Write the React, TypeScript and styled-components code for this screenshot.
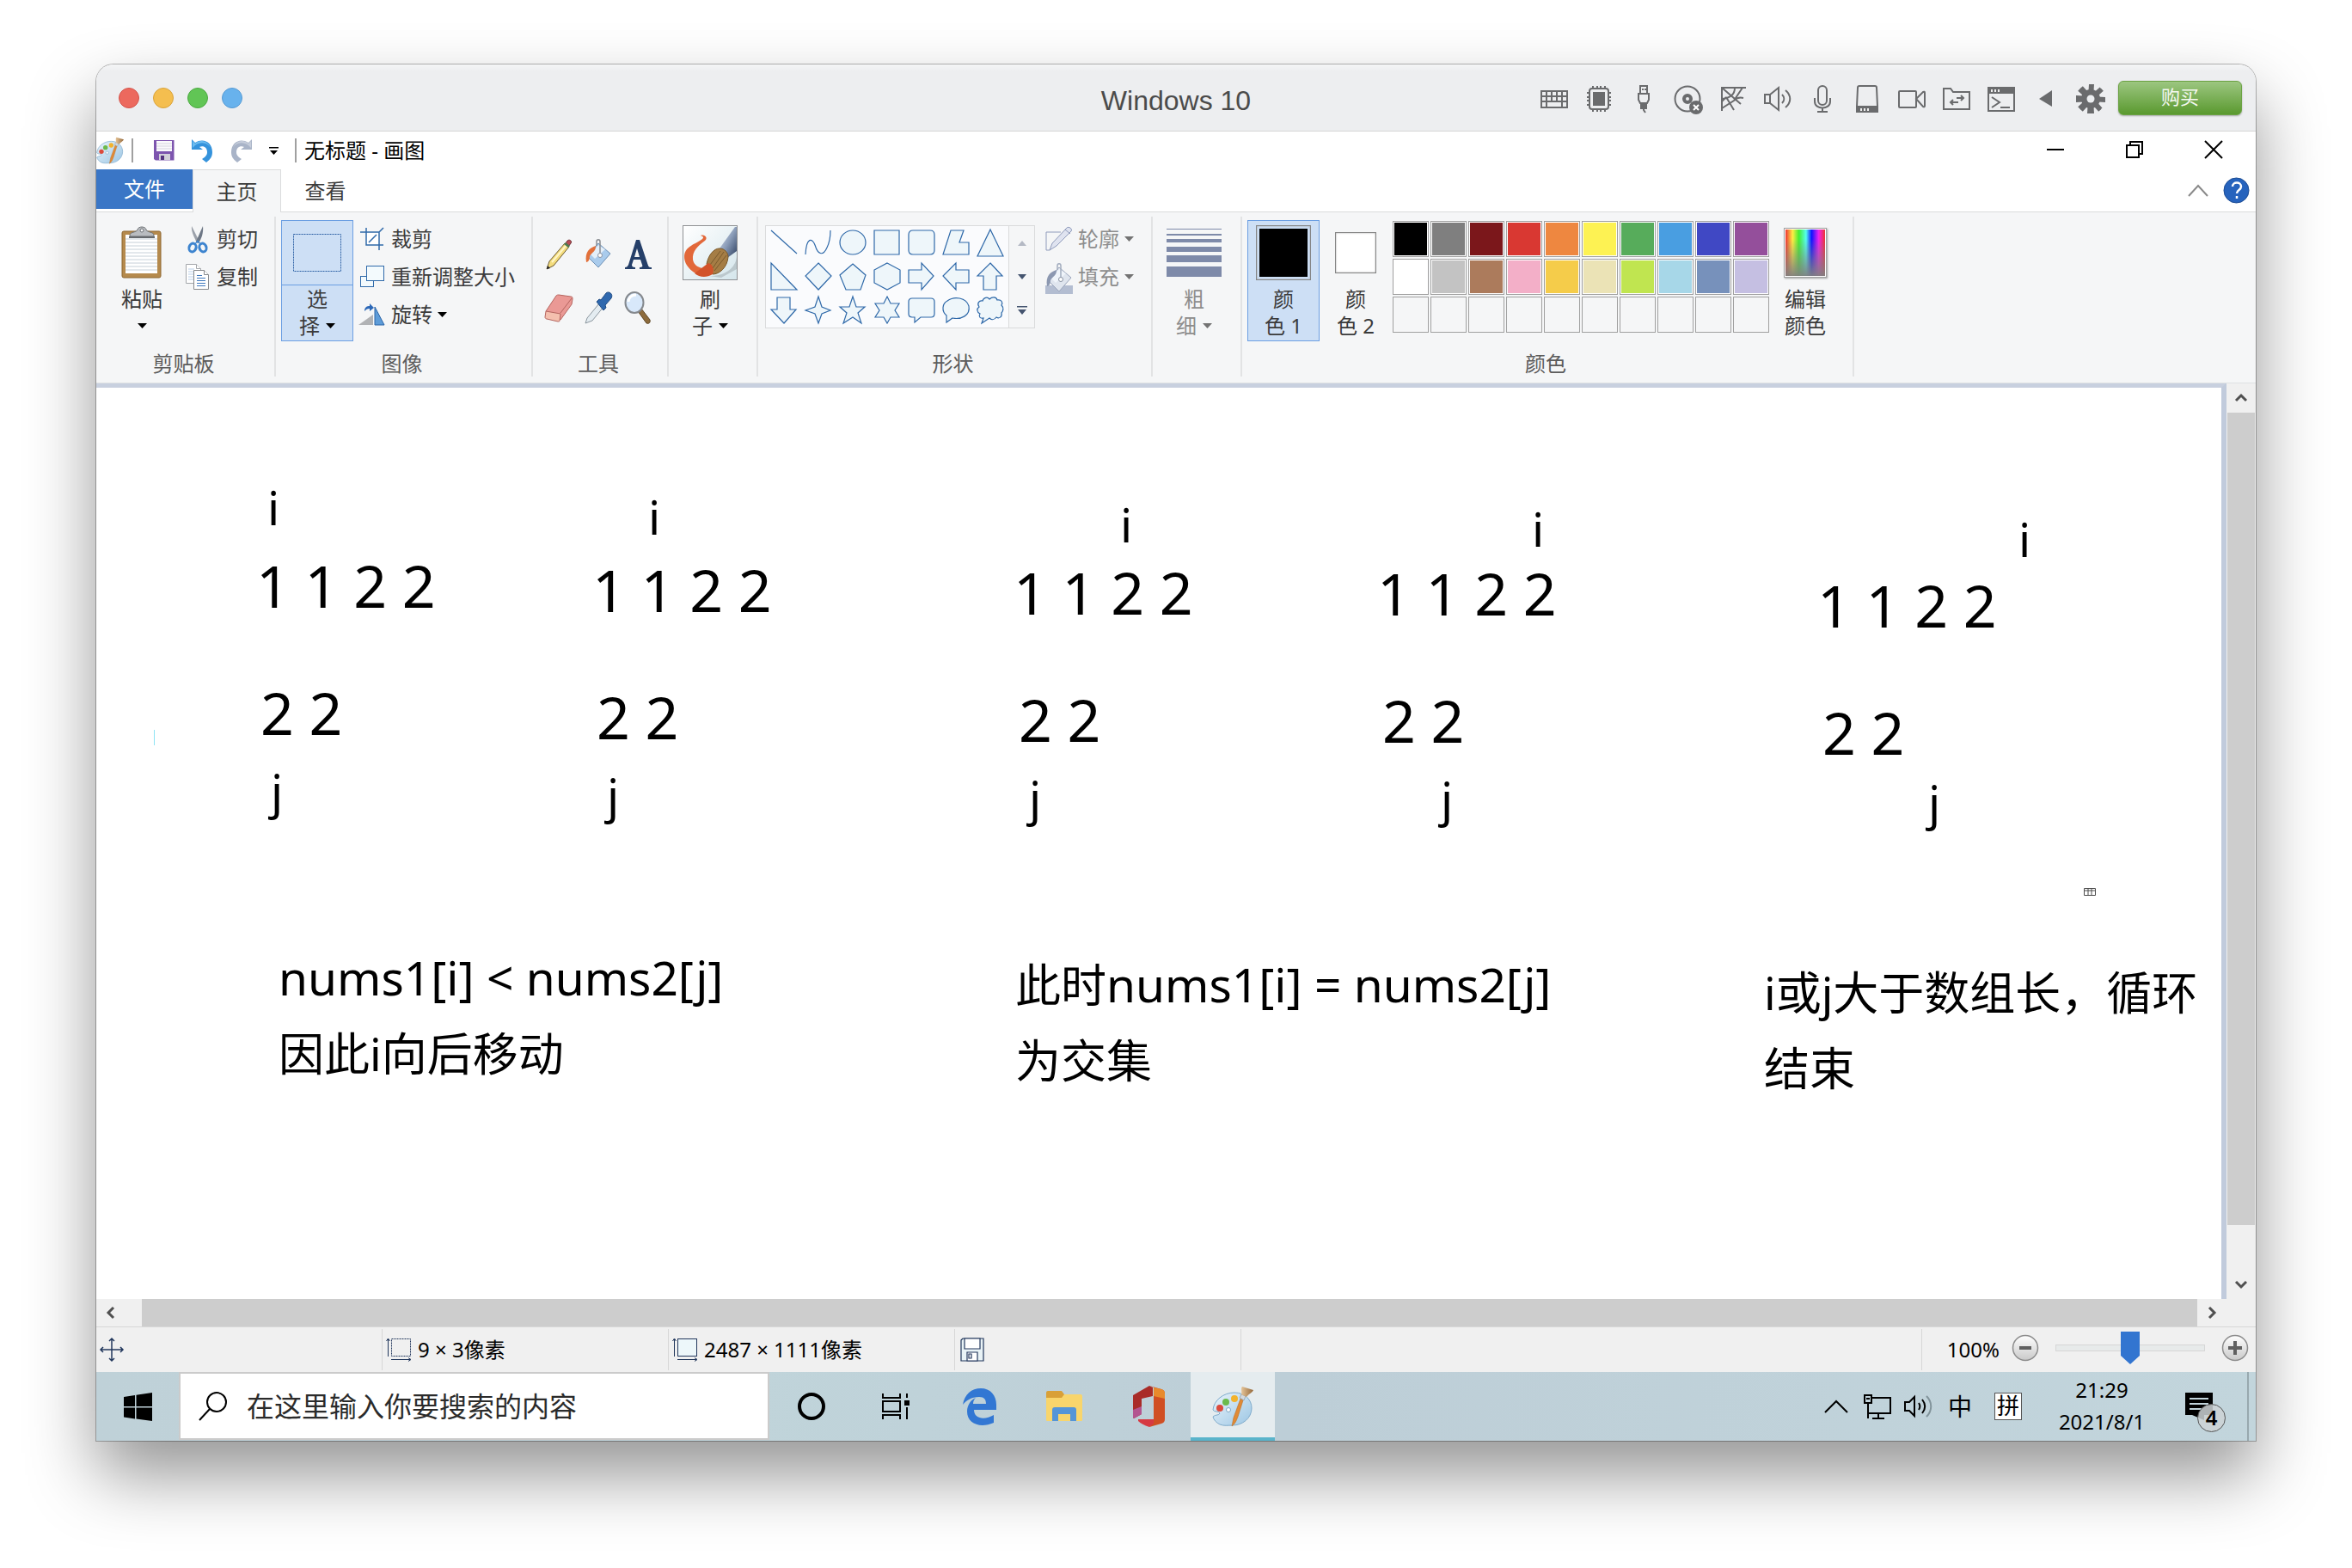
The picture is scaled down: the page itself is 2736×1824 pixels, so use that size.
import React from 'react';
import styled, { createGlobalStyle, css } from 'styled-components';

const ui = '"Noto Sans", "Noto Sans CJK SC", sans-serif';

const GlobalStyle = createGlobalStyle`
  * { box-sizing: border-box; }
  body { margin: 0; background: #fff; font-family: ${ui}; }
  button, input { font: inherit; color: inherit; }
  button { border: 0; padding: 0; background: none; cursor: default; }
  svg { display: block; flex: none; overflow: visible; }
`;

/* ---------- window shell ---------- */

const Stage = styled.div`
  min-height: 100vh;
  display: flex;
  padding: 75px 112px 148px;
`;

const Window = styled.main`
  flex: 1;
  min-width: 0;
  display: flex;
  flex-direction: column;
  background: #fff;
  border-radius: 20px 20px 0 0;
  box-shadow: 0 0 0 1px rgba(0, 0, 0, 0.28), 0 40px 80px rgba(0, 0, 0, 0.42);
  overflow: hidden;
  font-size: 24px;
  line-height: 32px;
`;

const MacBar = styled.header`
  display: grid;
  grid-template-columns: 1fr auto 1fr;
  align-items: center;
  height: 78px;
  background: linear-gradient(#f4f5f6, #edeef0 8px);
  border-bottom: 1px solid #d6d6d6;
`;

const Lights = styled.div`
  display: flex;
  gap: 16px;
  padding-left: 26px;
`;

const Light = styled.button<{ $fill: string; $edge: string }>`
  width: 24px;
  height: 24px;
  border-radius: 50%;
  background: ${p => p.$fill};
  border: 1px solid ${p => p.$edge};
`;

const MacTitle = styled.h1`
  margin: 0;
  padding-top: 6px;
  font: 400 32px/40px "Liberation Sans", Arial, sans-serif;
  color: #4b4b4b;
`;

const MacTools = styled.div`
  display: flex;
  align-items: center;
  justify-content: flex-end;
  padding-right: 16px;
`;

const MacTool = styled.button`
  width: 52px;
  height: 40px;
  padding-top: 3px;
  display: grid;
  place-items: center;
  color: #6a6b6d;
`;

const BuyButton = styled.button`
  width: 144px;
  height: 40px;
  margin-left: 6px;
  border: 1px solid #6ba243;
  border-radius: 6px;
  background: linear-gradient(#9cc680, #5a992f);
  box-shadow: 0 1px 2px rgba(0, 0, 0, 0.3);
  color: #f4f8f0;
  font-size: 22px;
  line-height: 32px;
  padding-bottom: 4px;
`;

/* ---------- title row and tabs ---------- */

const QuickBar = styled.div`
  display: flex;
  align-items: center;
  height: 44px;
`;

const QuickButton = styled.button<{ $w: number }>`
  width: ${p => p.$w}px;
  height: 44px;
  display: grid;
  place-items: center;
`;

const QuickGroup = styled.div`
  display: flex;
  padding-left: 4px;
`;

const Rule = styled.span`
  width: 2px;
  height: 28px;
  margin: 0 9px;
  background: #a0a0a0;
`;

const DocTitle = styled.h2`
  flex: 1;
  margin: 0;
  font-size: 24px;
  font-weight: 400;
  color: #000;
`;

const CaptionButton = styled.button`
  width: 92px;
  height: 44px;
  display: grid;
  place-items: center;
`;

const CaptionButtons = styled.div`
  display: flex;
  padding: 0 3px 2px 0;
`;

const TabRow = styled.nav`
  display: flex;
  height: 50px;
  border-bottom: 1px solid #dadbdc;
  color: #3b3b3b;
`;

const FileTab = styled.button`
  width: 112px;
  height: 46px;
  background: #3a76c6;
  color: #fff;
`;

const Tab = styled.button<{ $active?: boolean }>`
  width: 103px;
  height: 50px;
  ${p => p.$active && css`
    background: #f5f6f7;
    border: 1px solid #dadbdc;
    border-bottom: 0;
  `}
`;

const TabEnd = styled.div`
  margin-left: auto;
  display: flex;
  align-items: center;
  gap: 18px;
  padding-right: 7px;
`;

/* ---------- ribbon ---------- */

const Ribbon = styled.section`
  display: flex;
  padding: 5px 0 7px;
  background: #f5f6f7;
  border-bottom: 1px solid #dfe1e4;
  color: #3b3b3b;
`;

const Group = styled.div<{ $w: number }>`
  width: ${p => p.$w}px;
  height: 186px;
  display: flex;
  flex-direction: column;
  border-right: 2px solid #e2e3e4;
`;

const GroupBody = styled.div<{ $pad?: number; $gap?: number }>`
  flex: 1;
  display: flex;
  align-items: flex-start;
  gap: ${p => p.$gap ?? 3}px;
  padding: 4px 0 0 ${p => p.$pad ?? 6}px;
`;

const GroupLabel = styled.div`
  height: 30px;
  padding-right: 4px;
  line-height: 30px;
  text-align: center;
  color: #5c5c5c;
`;

const BigButton = styled.button<{ $on?: boolean; $split?: boolean }>`
  width: 84px;
  height: 141px;
  display: flex;
  flex-direction: column;
  align-items: center;
  border: 1px solid ${p => (p.$on ? '#6c9fe2' : 'transparent')};
  background: ${p => (p.$on ? '#cddff5' : 'none')};
  line-height: 31px;
  &:disabled { color: #8d8d8d; }
  > :first-child {
    width: 100%;
    height: 75px;
    display: grid;
    place-items: center;
    border-bottom: 1px solid ${p => (p.$split ? '#6c9fe2' : 'transparent')};
  }
`;

const Line = styled.span`
  display: flex;
  align-items: center;
  justify-content: center;
  gap: 7px;
  height: 31px;
  white-space: pre;
`;

const SmallColumn = styled.div`
  display: flex;
  flex-direction: column;
`;

const SmallButton = styled.button`
  display: flex;
  align-items: center;
  gap: 6px;
  height: 44px;
  padding: 0 4px;
  &:disabled { color: #8d8d8d; }
`;

const IconBox = styled.span`
  width: 32px;
  height: 32px;
  display: grid;
  place-items: center;
`;

const ToolGrid = styled.div`
  display: grid;
  grid-template-columns: repeat(3, 46px);
  grid-auto-rows: 62px;
  padding-top: 9px;
`;

const CellButton = styled.button`
  display: grid;
  place-items: center;
`;

const Frame = styled.span`
  width: 64px;
  height: 64px;
  border: 1px solid #8f9194;
  overflow: hidden;
`;

const Gallery = styled.div`
  display: grid;
  grid-template-columns: 1fr 30px;
  width: 314px;
  height: 120px;
  margin: 6px 5px 0 0;
  border: 1px solid #dadbdc;
  background: #fafbfd;
`;

const ShapeGrid = styled.div`
  display: grid;
  grid-template-columns: repeat(7, 40px);
  grid-template-rows: repeat(3, 1fr);
  padding-left: 1px;
`;

const GalleryScroll = styled.div`
  display: grid;
  grid-template-rows: repeat(3, 1fr);
  border-left: 1px solid #dadbdc;
  background: #f5f6f7;
`;

const Weights = styled.span`
  width: 64px;
  height: 56px;
  display: flex;
  flex-direction: column;
  justify-content: space-between;
`;

const Weight = styled.span<{ $h: number }>`
  height: ${p => p.$h}px;
  background: #7e8aa9;
`;

const Swatch = styled.span<{ $fill: string; $size: number; $pad: number }>`
  width: ${p => p.$size}px;
  height: ${p => p.$size}px;
  padding: ${p => p.$pad}px;
  border: 1px solid #858585;
  background: ${p => p.$fill} content-box;
  box-shadow: inset 0 0 2px #999;
`;

const Palette = styled.div`
  display: grid;
  grid-template-columns: repeat(10, 42px);
  grid-auto-rows: 42px;
  gap: 2px;
  padding: 1px 0 0 1px;
`;

const PaletteCell = styled.button<{ $fill?: string }>`
  border: 1px solid #a0a0a0;
  padding: 1px;
  background: ${p => (p.$fill ? `linear-gradient(${p.$fill}, ${p.$fill}) content-box, #fff` : 'none')};
`;

const Spectrum = styled.span`
  width: 50px;
  height: 58px;
  border: 1px solid #a0a0a0;
  padding: 1px;
  box-shadow: 1px 1px 2px rgba(0, 0, 0, 0.35);
  background:
    linear-gradient(rgba(128, 128, 128, 0) 20%, rgba(128, 128, 128, 0.95)) content-box,
    linear-gradient(90deg, #e33, #fe4 18%, #4e3 34%, #5fe 52%, #11f 66%, #e2e 84%, #e33) content-box,
    #fff;
`;

/* ---------- workspace ---------- */

const Workspace = styled.section`
  flex: 1;
  display: grid;
  grid-template-columns: minmax(0, 1fr) 34px;
  grid-template-rows: minmax(0, 1fr) 32px;
  background: #f0f0f0;
`;

const Canvas = styled.div`
  position: relative;
  min-height: 900px;
  background: #fff;
  border-top: 5px solid #c8d0df;
  border-right: 6px solid #c1cbdc;
  overflow: hidden;
  color: #000;
`;

const Note = styled.p<{ $x: number; $y: number; $size: number }>`
  position: absolute;
  left: ${p => p.$x}px;
  top: ${p => p.$y}px;
  margin: 0;
  font-size: ${p => p.$size}px;
  line-height: 88px;
  white-space: pre;
`;

const Code = styled.span`
  font-size: 55px;
`;

const Scroll = styled.div<{ $vertical?: boolean }>`
  display: flex;
  flex-direction: ${p => (p.$vertical ? 'column' : 'row')};
  ${p => p.$vertical && css`padding: 0 1px;`}
`;

const ScrollButton = styled.button`
  flex: none;
  min-width: 32px;
  height: 34px;
  display: grid;
  place-items: center;
`;

const SideScrollButton = styled(ScrollButton)`
  width: 34px;
  height: 32px;
`;

const Thumb = styled.div<{ $grow: number }>`
  flex: ${p => p.$grow};
  background: #cdcdcd;
`;

const Track = styled.div<{ $grow: number }>`
  flex: ${p => p.$grow};
`;

const TrackGap = styled.div`
  width: 19px;
`;

/* ---------- status bar ---------- */

const Status = styled.footer`
  display: flex;
  height: 53px;
  border-top: 1px solid #d7d7d7;
  background: #f0f0f0;
  color: #000;
`;

const Cell = styled.div<{ $w?: number }>`
  ${p => (p.$w ? `width: ${p.$w}px` : 'flex: 1')};
  display: flex;
  align-items: center;
  gap: 7px;
  margin: 2px 0;
  padding-left: 4px;
  border-right: 1px solid #d7d7d7;
`;

const Zoom = styled.div`
  display: flex;
  align-items: center;
  padding: 0 8px 4px 29px;
`;

const ZoomText = styled.label`
  padding: 4px 14px 0 0;
`;

const Slider = styled.input`
  width: 174px;
  height: 38px;
  margin: 0 19px;
  appearance: none;
  background: none;
  &::-webkit-slider-runnable-track {
    height: 8px;
    background: #e7eaea;
    border: 1px solid #d6d6d6;
  }
  &::-webkit-slider-thumb {
    appearance: none;
    width: 22px;
    height: 38px;
    margin-top: -16px;
    background: #3275d0;
    clip-path: polygon(0 0, 100% 0, 100% 74%, 50% 100%, 0 74%);
  }
`;

/* ---------- taskbar ---------- */

const Taskbar = styled.nav`
  display: flex;
  height: 80px;
  background: linear-gradient(90deg, #bfd1d8, #c0d4da 30%, #bdced7 55%, #c2d5dc);
  color: #000;
`;

const TaskButton = styled.button<{ $w?: number; $active?: boolean }>`
  width: ${p => p.$w ?? 98}px;
  height: 80px;
  display: grid;
  place-items: center;
  ${p => p.$active && css`
    background: #e5ecef;
    box-shadow: inset 0 -4px #5ab4cb;
  `}
`;

const Search = styled.label`
  width: 687px;
  height: 79px;
  display: flex;
  align-items: center;
  gap: 22px;
  padding-left: 21px;
  border: 2px solid #cbcbcb;
  background: #fff;
`;

const SearchInput = styled.input`
  flex: 1;
  min-width: 0;
  border: 0;
  padding: 0;
  outline: 0;
  background: none;
  font-size: 32px;
  line-height: 44px;
  &::placeholder { color: #2b2b2b; opacity: 1; }
`;

const Tray = styled.div`
  display: flex;
  margin-left: auto;
`;

const ImeMode = styled.span`
  width: 32px;
  height: 32px;
  border: 1px solid #555;
  background: #fff;
  font-size: 26px;
  line-height: 29px;
  text-align: center;
`;

const ImeLang = styled.span`
  font-size: 28px;
  line-height: 36px;
`;

const Clock = styled.time`
  width: 154px;
  padding-top: 2px;
  line-height: 37px;
  text-align: center;
`;

const NoticeButton = styled(TaskButton)`
  position: relative;
`;

const Badge = styled.span`
  position: absolute;
  left: 34px;
  top: 37px;
  width: 33px;
  height: 33px;
  border: 1px solid #555;
  border-radius: 50%;
  background: rgba(205, 210, 213, 0.85);
  font-weight: 600;
  line-height: 30px;
  text-align: center;
`;

const ShowDesktop = styled.button`
  width: 10px;
  border-left: 2px solid #98a8ae;
`;

/* ---------- drawings ---------- */

const Caret = ({ fill = '#000' }: { fill?: string }) => (
  <svg width="11" height="6"><path d="M0 0h11L5.500 6z" fill={fill} /></svg>
);

const PaletteIcon = ({ size }: { size: number }) => (
  <svg width={size} height={size} viewBox="0 0 48 48">
    <defs>
      <linearGradient id="pal" x1="0" y1="0" x2="1" y2="1">
        <stop offset="0" stopColor="#e9f4fb" /><stop offset="1" stopColor="#9cc6e4" />
      </linearGradient>
      <linearGradient id="hair" x1="0" y1="0" x2="1" y2="0">
        <stop offset="0" stopColor="#e5c497" /><stop offset="1" stopColor="#94683a" />
      </linearGradient>
    </defs>
    <path d="M9 45c-4-2-7-5-8-9 3-3 7-1 8-4-1-3-7-1-8-4C2 17 13 8 26 8c12 0 20 8 20 18 0 12-11 20-22 20-6 0-10 1-15-1z" fill="url(#pal)" stroke="#7fabcb" strokeWidth="1" />
    <circle cx="9" cy="26" r="4" fill="#dc4a3c" /><circle cx="16" cy="19" r="4" fill="#6cba4c" />
    <circle cx="26" cy="15" r="4" fill="#f3b32d" /><circle cx="19" cy="28" r="2.500" fill="#fff" stroke="#7da7c5" />
    <path d="M36 17l-3-2-8 22-2 10c4-3 5-6 7-11z" fill="#e18a35" stroke="#b9702c" strokeWidth=".6" />
    <path d="M37 17l-5-3 2-4 5 2z" fill="#d3d9de" stroke="#8d979e" strokeWidth=".7" />
    <path d="M34 10c1-3-1-7 1-9l13 4c-1 3-5 4-8 8z" fill="url(#hair)" />
  </svg>
);

const SaveIcon = () => (
  <svg width="24" height="24" viewBox="0 0 24 24">
    <path d="M0 0h23.500v23.500H2L0 22z" fill="#7d55ae" />
    <path d="M3 1h18v12H3z" fill="#fafafc" /><path d="M3 4h18M3 7h18M3 10h18" stroke="#d6d4e0" />
    <path d="M6 16h13v7H6z" fill="#d2d0d8" /><path d="M8 18h4v5H8z" fill="#54347e" />
  </svg>
);

const UndoIcon = ({ redo }: { redo?: boolean }) => (
  <svg width="26" height="28" viewBox="0 0 26 28">
    <g transform={redo ? 'translate(26 0) scale(-1 1)' : undefined}>
      <path d="M0 1v12h13L9 10c5-2 9 1 9 6 0 4-3 6-6 8l5 4c5-4 7-7 7-12C24 4 13-1 4 5z" fill={redo ? '#a9b4c8' : '#3593dc'} />
      <path d="M1 3v8l3-3c7-5 17-3 19 6C20 3 11 0 4 6z" fill={redo ? '#c6cddb' : '#6cbcf0'} />
    </g>
  </svg>
);

const PasteIcon = () => (
  <svg width="48" height="60" viewBox="0 0 48 60">
    <rect x="1" y="5" width="45" height="54" rx="2" fill="#b58a4d" stroke="#8d6630" />
    <path d="M5 9h37v45H5z" fill="#fff" />
    <path d="M5 14h37M5 18h37M5 22h37M5 26h37M5 30h37M5 34h37M5 38h37M5 42h37M5 46h37M5 50h37" stroke="#c6d0d8" />
    <path d="M10 10c0-5 8-3 9-7 1-4 9-4 10 0 1 4 9 2 9 7v1H10z" fill="#b9bcc0" stroke="#6e7276" />
    <circle cx="24" cy="4" r="2" fill="#f5f6f7" stroke="#6e7276" /><path d="M9 11h30v2H9z" fill="#666a6e" />
  </svg>
);

const CutIcon = () => (
  <svg width="24" height="32" viewBox="0 0 24 32">
    <path d="M5 1l9 18-3 2C9 15 4 8 5 1z" fill="#9ba1aa" /><path d="M18 1l-8 18 3 2c3-5 6-12 5-20z" fill="#6d7785" />
    <g fill="none" stroke="#3d84cf" strokeWidth="3"><ellipse cx="6" cy="26" rx="4" ry="5" transform="rotate(20 6 26)" /><ellipse cx="18" cy="26" rx="4" ry="5" transform="rotate(-20 18 26)" /></g>
    <path d="M8 22l4-5 4 5-4-2z" fill="#3d84cf" />
  </svg>
);

const CopyIcon = () => (
  <svg width="28" height="30" viewBox="0 0 28 30">
    <g fill="#fff" stroke="#a3a6aa"><path d="M.5.5h12l5 5v17H.5z" /><path d="M12.500.5v5h5" /></g>
    <path d="M3 6h7M3 9h7M3 12h7M3 15h7M3 18h7" stroke="#b9cfe8" />
    <g fill="#fff" stroke="#85888c"><path d="M9.500 7.500h12l5 5v17h-17z" /><path d="M21.500 7.500v5h5" /></g>
    <path d="M13 13.500h6M13 16.500h10M13 19.500h10M13 22.500h10M13 25.500h10" stroke="#3f78bd" />
  </svg>
);

const SelectIcon = () => (
  <svg width="58" height="46"><rect x="1.500" y="1.500" width="55" height="43" fill="none" stroke="#2a5ea3" strokeDasharray="2 1" /></svg>
);

const CropIcon = () => (
  <svg width="28" height="28" fill="none" stroke="#2f69a9" strokeWidth="1.500">
    <rect x="7" y="7" width="15" height="14" fill="#fff" stroke="none" />
    <path d="M0 6h22v21M7 1v20h20M22 6l5-5M10 18l9-9" />
  </svg>
);

const ResizeIcon = () => (
  <svg width="30" height="26" fill="#f3fafd" stroke="#2f69a9">
    <rect x="1.500" y="12.500" width="15" height="12" /><rect x="8.500" y=".5" width="20" height="17" />
  </svg>
);

const RotateIcon = () => (
  <svg width="32" height="26">
    <path d="M0 25h17V13z" fill="#b1b2b4" /><path d="M19 25V4l11 21z" fill="#5e9cd8" stroke="#2a64a8" />
    <path d="M7 9c0-5 3-6 6-6V0l5 5-5 4V6c-3 0-4 1-6 3z" fill="#2c68b8" />
  </svg>
);

const PencilIcon = () => (
  <svg width="32" height="36" viewBox="0 0 32 36">
    <path d="M2 35l3-9L23 5l5 4-18 22z" fill="#f3dc7c" stroke="#6c5a33" /><path d="M8 27L25 7" stroke="#fff6c8" strokeWidth="2" />
    <path d="M24 5l2-3c2-2 6 0 4 3l-3 4z" fill="#b84d56" stroke="#6d3034" /><path d="M22 6l5 4 2-2-5-4z" fill="#4d7a50" />
    <path d="M2 35l1-4 3 3z" fill="#222" />
  </svg>
);

const BucketIcon = ({ muted }: { muted?: boolean }) => (
  <svg width="32" height="36" viewBox="0 0 32 36">
    {muted && <path d="M0 26h32v10H0z" fill="#b3bdd1" />}
    <path d="M16 5L3 20l13 13 14-16z" fill={muted ? '#dfe5ee' : '#a9cbec'} stroke={muted ? '#9aa5bb' : '#6c8fb4'} />
    <path d="M16 7L7 18l5 5 12-11z" fill="#f2f7fc" opacity=".8" />
    <path d="M13 8C6 10 0 15 2 27c3 0 4-4 4-7 3-5 7-5 7-12z" fill={muted ? '#8c98b1' : '#e2703a'} />
    <path d="M18 17V3c0-3-4-3-4 0v5" fill="none" stroke={muted ? '#a3adbf' : '#8a8d92'} strokeWidth="1.500" /><circle cx="18" cy="19" r="2.500" fill="#fff" stroke="#8a93a3" />
  </svg>
);

const TextIcon = () => (
  <svg width="32" height="36" viewBox="0 0 32 36">
    <path d="M14 1h4l10 30c1 2 2 2 4 2v2H18v-2c3 0 4-1 3-3l-2-6h-8l-2 6c0 2 1 3 4 3v2H1v-2c2 0 3-1 4-3zM12 21h6l-3-10z" fill="#253f69" fillRule="evenodd" />
  </svg>
);

const EraserIcon = () => (
  <svg width="34" height="32" viewBox="0 0 34 32" stroke="#b5655f">
    <path d="M2 20L14 2c1-1 2-1 3-1l14 2c2 0 2 1 2 3l-1 6-13 18z" fill="#ea9995" />
    <path d="M2 20l17 3-1 8c0 1-1 1-2 1L3 29c-1 0-2-1-2-2z" fill="#f4bfae" /><path d="M19 22L32 5" />
  </svg>
);

const DropperIcon = () => (
  <svg width="32" height="38" viewBox="0 0 32 38">
    <path d="M1 37l2-6 14-17 5 4L9 34z" fill="#e4ecf1" stroke="#8b969e" />
    <path d="M14 12l3-3 2 1 6-8c3-3 9 1 6 6l-7 8 1 3-3 3z" fill="#2f68ae" stroke="#1f4a82" />
  </svg>
);

const MagnifierIcon = () => (
  <svg width="32" height="38" viewBox="0 0 32 38">
    <path d="M16 23l4-3 10 13c1 4-2 5-4 4z" fill="#8d6b3c" stroke="#5e4726" />
    <ellipse cx="12" cy="13" rx="10.500" ry="12" fill="#d8e8fa" stroke="#85898e" strokeWidth="2" /><path d="M5 12c0-5 4-8 9-8" stroke="#fff" strokeWidth="3" fill="none" />
  </svg>
);

const BrushIcon = () => (
  <svg width="62" height="62" viewBox="0 0 62 62">
    <defs>
      <linearGradient id="paper" x1="0" y1="0" x2="1" y2="1"><stop offset="0" stopColor="#fff" /><stop offset="1" stopColor="#d5e6ec" /></linearGradient>
      <linearGradient id="ferrule" x1="0" y1="0" x2="1" y2="1"><stop offset="0" stopColor="#dfe7f2" /><stop offset=".5" stopColor="#8a9cb8" /><stop offset="1" stopColor="#2f4161" /></linearGradient>
    </defs>
    <path d="M0 0h62v62H0z" fill="url(#paper)" />
    <path d="M30 58c18 0 30-8 32-22v14L44 60z" fill="#8c979c" opacity=".4" />
    <path d="M20 11c5-2 9 3 5 6C17 23 10 29 11 39c1 6 6 9 11 10l8-4-3 13C12 58 1 46 1 36 1 23 15 21 22 15c2-2 1-3-2-4z" fill="#e2683a" />
    <path d="M42 26L60 1h2v28L51 37z" fill="url(#ferrule)" />
    <path d="M27 44c2-10 8-18 15-18 6 0 10 5 10 10-1 12-10 20-18 20z" fill="#a57d45" stroke="#7a5828" />
    <path d="M31 45l12-16M34 49l13-19M36 52l14-18" stroke="#7a5a2c" />
    <path d="M13 55l16-12c5 1 7 8 5 13-7 4-15 4-21-1z" fill="#d2532a" />
  </svg>
);

const shapes = [
  'M1 1L31 28', 'M1 29C2 8 9 10 12 18C16 31 22 30 26 21C29 15 30 8 30 1',
  'M1 15a15 14 0 1 0 30 0a15 14 0 1 0-30 0z', 'M1 1H30V29H1z',
  'M6 1H26Q31 1 31 6V24Q31 29 26 29H6Q1 29 1 24V6Q1 1 6 1z',
  'M10 1H25L20 15H31V29H1z', 'M16 0L31 31H1z',
  'M1 0V31H31z', 'M16 0L31 15L16 31L1 15z', 'M16 1L31 14L25 31H8L1 14z',
  'M16 0L31 8V23L16 31L1 23V8z', 'M1 8H16V0L30 15L16 31V23H1z',
  'M31 8H16V0L1 15L16 31V23H31z', 'M16 0L30 15H23V31H8V15H1z',
  'M8 1H23V15H30L16 31L1 15H8z', 'M16 0L20 12L30 16L20 20L16 31L12 20L1 16L12 12z',
  'M16 0L20 12H30L22 19L26 31L16 24L5 31L9 19L1 12H12z',
  'M16 0L20 8H30L25 16L30 24H20L16 31L12 24H2L7 16L2 8H12z',
  'M5 2H27Q31 2 31 6V20Q31 24 27 24H15L8 30V24H5Q1 24 1 20V6Q1 2 5 2z',
  'M5 30V22C-1 17 0 8 6 5C14-1 28 1 31 11C33 22 22 27 12 25z',
  'M6 31L8 25C4 26 2 23 4 20C0 18 0 14 3 12C0 8 3 4 7 5C8 1 13 0 15 3C18 0 23 0 24 4C29 3 31 7 29 10C32 13 31 17 29 19C30 24 26 26 23 24C20 28 17 27 15 25z',
];
const shapeNames = ['直线', '曲线', '椭圆形', '矩形', '圆角矩形', '多边形', '三角形', '直角三角形', '菱形', '五边形', '六边形', '右箭头', '左箭头', '向上箭头', '向下箭头', '四角星形', '五角星形', '六角星形', '圆角矩形标注', '椭圆形标注', '云形标注'];

const OutlineIcon = () => (
  <svg width="32" height="30" viewBox="0 0 32 30" fill="none" stroke="#8f9bbb">
    <path d="M18 7H1v21h4" /><path d="M5 28l3-8L25 2c2-2 7 1 5 4L13 23z" fill="#dfe3f0" /><path d="M23 4l6 5" />
  </svg>
);

const WinLogo = () => (
  <svg width="33" height="33" viewBox="0 0 33 33"><path d="M0 5l13-2v13H0zM14.500 2.700L33 0v16H14.500zM0 17.500h13v13L0 28.500zM14.500 17.500H33V33l-18.500-2.500z" /></svg>
);

const EdgeIcon = () => (
  <svg width="40" height="43" viewBox="0 0 40 43">
    <path d="M0 19C2 7 10 0 21 0c11 0 18 8 18 19v6H13c0 11 13 12 23 6v9C20 47 5 41 5 27c0-8 5-14 10-16-2 2-3 4-3 7h15c0-5-2-8-8-8C10 10 4 14 0 19z" fill="#3277d3" />
  </svg>
);

const FolderIcon = () => (
  <svg width="42" height="36" viewBox="0 0 42 36">
    <path d="M0 2Q0 0 2 0h16l3 4v8H0z" fill="#d9a037" /><path d="M0 8h18l3-4h19q2 0 2 2v28q0 1-1 1H1q-1 0-1-1z" fill="#f8d56c" />
    <path d="M7 35V22q0-3 3-3h22q3 0 3 3v13h-7v-8H14v8z" fill="#5495d8" />
  </svg>
);

const OfficeIcon = () => (
  <svg width="37" height="48" viewBox="0 0 37 48">
    <path d="M0 11L19 0l4 2v10L10 15v18L1 38q-1 0-1-2z" fill="#a92c28" /><path d="M0 28v8q0 2 1 2l9-5v-9z" fill="#b35590" />
    <path d="M19 0l14 4q4 1 4 5v30q0 4-4 5l-14 4 5-7V2z" fill="#d04f23" /><path d="M24 2l9 2q4 1 4 5v6l-13-3z" fill="#e88a2c" />
    <path d="M6 39h18v5l-5 4q-9-3-13-7z" fill="#d63a43" />
  </svg>
);

const macIcons: [string, React.ReactNode][] = [
  ['键盘', <><path d="M1 7h30v19H1zM1 13h30M1 19h30M7 7v12M13 7v12M19 7v12M25 7v12M7 19v7M25 19v7" /></>],
  ['处理器', <><rect x="5" y="4" width="22" height="24" rx="3" /><path d="M10 9h12v14H10z" fill="currentColor" /><path d="M9 1v3M14 1v3M18 1v3M23 1v3M9 28v3M14 28v3M18 28v3M23 28v3M2 9h3M2 14h3M2 18h3M2 23h3M27 9h3M27 14h3M27 18h3M27 23h3" /></>],
  ['USB', <><path d="M12 1h8v9h-8zM15 4v2M18 4v2M10 10h12v7l-2 4h-8l-2-4z" /><path d="M13 21h6v6h-6z" fill="currentColor" /><path d="M16 27v2l2 3" /></>],
  ['光盘', <><circle cx="15" cy="16" r="14.500" /><circle cx="15" cy="16" r="4" strokeWidth="4" /><circle cx="25" cy="26" r="8" fill="currentColor" stroke="none" /><path d="M22 23l6 6M28 23l-6 6" stroke="#fff" /></>],
  ['网络', <><path d="M3 30V3h28M3 3l22 19M8 14l9 15M3 27l14-9L27 3M18 3c0 7-4 12-15 13M28 15c-4-1-8 0-11 3M3 19l5-5" /></>],
  ['声音', <><path d="M1 11h6L17 3v26L7 21H1zM7 11v10M21 11c3 3 3 7 0 10M25 6c7 6 7 14 0 20" /></>],
  ['麦克风', <><rect x="11" y="1" width="10" height="22" rx="5" /><path d="M7 15v4c0 10 18 10 18 0v-4M16 26v5M10 31h12" /></>],
  ['磁盘', <><path d="M5 3q0-2 2-2h18q2 0 2 2l1 22v6H4v-6z" /><path d="M4 25h24v6H4z" fill="currentColor" /><path d="M9 27v3M13 27v3M17 27v3" stroke="#eee" /></>],
  ['摄像头', <><rect x="1" y="7" width="20" height="19" rx="1" /><path d="M21 16l8-8q2-1 2 1v15q0 2-2 1z" /></>],
  ['共享文件夹', <><path d="M1 28V4h8l3 4h19v20zM9 20h9M12 17l-3 3 3 3M16 15h8M21 12l3 3-3 3" /></>],
  ['终端', <><path d="M1 3h30v27H1z" /><path d="M1 3h30v6H1z" fill="currentColor" /><path d="M5 5v3M9 5v3M13 5v3" stroke="#eee" /><path d="M5 14l9 6-9 6M15 26h11" /></>],
  ['收起', <path d="M23 6v19L8 16z" fill="currentColor" stroke="none" />],
];

const Gear = () => (
  <svg width="34" height="34" viewBox="-17 -17 34 34">
    {[0, 45, 90, 135].map(a => <path key={a} d="M-2-17h4l2 34h-8z M-4-17" transform={`rotate(${a})`} fill="currentColor" />)}
    {[0, 45, 90, 135].map(a => <path key={a} d="M-2 17h4l2-34h-4z" transform={`rotate(${a})`} fill="currentColor" />)}
    <circle r="11" fill="currentColor" /><circle r="4.500" fill="#eceef0" />
  </svg>
);

const Arrow = ({ d, w = 12, h = 12, color = '#505050', weight = 3 }: { d: string; w?: number; h?: number; color?: string; weight?: number }) => (
  <svg width={w} height={h} viewBox="0 0 12 12" preserveAspectRatio="none"><path d={d} fill="none" stroke={color} strokeWidth={weight} vectorEffect="non-scaling-stroke" /></svg>
);

const RoundButton = ({ plus }: { plus?: boolean }) => (
  <svg width="32" height="32" viewBox="0 0 32 32">
    <defs><linearGradient id="knob" x1="0" y1="0" x2="0" y2="1"><stop offset="0" stopColor="#fff" /><stop offset="1" stopColor="#c9c9c9" /></linearGradient></defs>
    <circle cx="16" cy="16" r="14.500" fill="url(#knob)" stroke="#8c8c8c" strokeWidth="1.500" />
    <path d={plus ? 'M8 16h16M16 8v16' : 'M9 16h14'} stroke="#606060" strokeWidth="4" />
  </svg>
);

const MeasureIcon = ({ solid }: { solid?: boolean }) => (
  <svg width="30" height="28" fill="none" stroke="#22375c">
    <rect x="6.500" y="1.500" width="22" height="20" fill={solid ? '#edf7fa' : 'none'} strokeDasharray={solid ? undefined : '2 1'} />
    <path d="M2.500 22V2M.5 4l2-3 2 3M6 25.500h22M26 23.500l3 2-3 2" />
  </svg>
);

/* ---------- content ---------- */

const colors = [
  '#000000', '#7f7f7f', '#7b171b', '#d93832', '#ee8740', '#fdf253', '#57ac5b', '#499ee1', '#4048c4', '#944f9b',
  '#ffffff', '#c3c3c3', '#ac7b5c', '#f3afc8', '#f5cc4a', '#ebe3b6', '#c0e550', '#a7d7e8', '#7791bb', '#c5bfe2',
];

const steps = [
  { i: [199, 95], top: [186, 186], low: [191, 334], j: [203, 425] },
  { i: [642, 106], top: [577, 191], low: [582, 339], j: [594, 430] },
  { i: [1191, 115], top: [1067, 194], low: [1073, 342], j: [1085, 433] },
  { i: [1670, 120], top: [1490, 195], low: [1496, 343], j: [1564, 434] },
  { i: [2236, 132], top: [2002, 209], low: [2008, 357], j: [2131, 438] },
];

export default function App() {
  return (
    <>
      <GlobalStyle />
      <Stage>
        <Window>
          <MacBar>
            <Lights>
              <Light aria-label="关闭虚拟机" $fill="#ec695e" $edge="#d5534a" />
              <Light aria-label="最小化虚拟机" $fill="#f4be4f" $edge="#daa33a" />
              <Light aria-label="缩放" $fill="#61c555" $edge="#4ba941" />
              <Light aria-label="融合" $fill="#68b2ed" $edge="#569ad4" />
            </Lights>
            <MacTitle>Windows 10</MacTitle>
            <MacTools>
              {macIcons.map(([name, art]) => (
                <MacTool key={name} aria-label={name}>
                  <svg width="32" height="32" viewBox="0 0 32 32" fill="none" stroke="currentColor" strokeWidth="2">{art}</svg>
                </MacTool>
              ))}
              <MacTool aria-label="设置"><Gear /></MacTool>
              <BuyButton>购买</BuyButton>
            </MacTools>
          </MacBar>

          <QuickBar>
            <PaletteIcon size={32} />
            <Rule />
            <QuickGroup>
              <QuickButton $w={46} aria-label="保存"><SaveIcon /></QuickButton>
              <QuickButton $w={44} aria-label="撤消"><UndoIcon /></QuickButton>
              <QuickButton $w={44} aria-label="重做"><UndoIcon redo /></QuickButton>
              <QuickButton $w={32} aria-label="自定义快速访问工具栏">
                <svg width="11" height="9"><path d="M0 0h11v1.500H0zM1 4h9L5.500 9z" /></svg>
              </QuickButton>
            </QuickGroup>
            <Rule />
            <DocTitle>无标题 - 画图</DocTitle>
            <CaptionButtons>
              <CaptionButton aria-label="最小化"><svg width="20" height="20"><path d="M0 10h20" stroke="#000" strokeWidth="2" /></svg></CaptionButton>
              <CaptionButton aria-label="还原">
                <svg width="20" height="20" fill="none" stroke="#000" strokeWidth="2"><path d="M1 5h14v14H1zM5 5V1h14v14h-4" /></svg>
              </CaptionButton>
              <CaptionButton aria-label="关闭"><svg width="20" height="20"><path d="M0 0l20 20M20 0L0 20" stroke="#000" strokeWidth="2" /></svg></CaptionButton>
            </CaptionButtons>
          </QuickBar>

          <TabRow>
            <FileTab>文件</FileTab>
            <Tab $active>主页</Tab>
            <Tab>查看</Tab>
            <TabEnd>
              <button aria-label="折叠功能区"><Arrow d="M0 12L6 0l6 12" w={22} h={12} color="#8a8a8a" weight={2} /></button>
              <button aria-label="帮助">
                <svg width="31" height="31" viewBox="0 0 31 31">
                  <circle cx="15.500" cy="15.500" r="14.500" fill="#2663bd" stroke="#1c4b93" />
                  <path d="M11 11c0-6 10-6 10 0 0 4-5 4-5 8M16 22v3" fill="none" stroke="#fff" strokeWidth="2.500" />
                </svg>
              </button>
            </TabEnd>
          </TabRow>

          <Ribbon>
            <Group $w={209}>
              <GroupBody $pad={11}>
                <BigButton><span><PasteIcon /></span><Line>粘贴</Line><Line><Caret /></Line></BigButton>
                <SmallColumn>
                  <SmallButton><IconBox><CutIcon /></IconBox>剪切</SmallButton>
                  <SmallButton><IconBox><CopyIcon /></IconBox>复制</SmallButton>
                </SmallColumn>
              </GroupBody>
              <GroupLabel>剪贴板</GroupLabel>
            </Group>

            <Group $w={299}>
              <GroupBody $gap={2}>
                <BigButton $on $split><span><SelectIcon /></span><Line>选</Line><Line>择<Caret /></Line></BigButton>
                <SmallColumn>
                  <SmallButton><IconBox><CropIcon /></IconBox>裁剪</SmallButton>
                  <SmallButton><IconBox><ResizeIcon /></IconBox>重新调整大小</SmallButton>
                  <SmallButton><IconBox><RotateIcon /></IconBox>旋转<Caret /></SmallButton>
                </SmallColumn>
              </GroupBody>
              <GroupLabel>图像</GroupLabel>
            </Group>

            <Group $w={158}>
              <GroupBody $pad={7}>
                <ToolGrid>
                  <CellButton aria-label="铅笔"><PencilIcon /></CellButton>
                  <CellButton aria-label="用颜色填充"><BucketIcon /></CellButton>
                  <CellButton aria-label="文本"><TextIcon /></CellButton>
                  <CellButton aria-label="橡皮擦"><EraserIcon /></CellButton>
                  <CellButton aria-label="颜色选取器"><DropperIcon /></CellButton>
                  <CellButton aria-label="放大镜"><MagnifierIcon /></CellButton>
                </ToolGrid>
              </GroupBody>
              <GroupLabel>工具</GroupLabel>
            </Group>

            <Group $w={104}>
              <GroupBody>
                <BigButton><span><Frame><BrushIcon /></Frame></span><Line>刷</Line><Line>子<Caret /></Line></BigButton>
              </GroupBody>
            </Group>

            <Group $w={459}>
              <GroupBody $pad={8}>
                <Gallery>
                  <ShapeGrid>
                    {shapes.map((d, n) => (
                      <CellButton key={d} aria-label={shapeNames[n]}>
                        <svg width="32" height="32" viewBox="0 0 32 32">
                          <path d={d} fill={n < 2 ? 'none' : '#eef6fa'} stroke="#2f69a9" strokeWidth="1.200" />
                        </svg>
                      </CellButton>
                    ))}
                  </ShapeGrid>
                  <GalleryScroll>
                    <CellButton aria-label="上一行"><svg width="10" height="6"><path d="M0 6h10L5 0z" fill="#b4b9c4" /></svg></CellButton>
                    <CellButton aria-label="下一行"><svg width="10" height="6"><path d="M0 0h10L5 6z" fill="#44546f" /></svg></CellButton>
                    <CellButton aria-label="其他"><svg width="12" height="10"><path d="M0 0h12v1.500H0zM1 4h10L6 10z" fill="#44546f" /></svg></CellButton>
                  </GalleryScroll>
                </Gallery>
                <SmallColumn>
                  <SmallButton disabled><IconBox><OutlineIcon /></IconBox>轮廓<Caret fill="#737373" /></SmallButton>
                  <SmallButton disabled><IconBox><BucketIcon muted /></IconBox>填充<Caret fill="#737373" /></SmallButton>
                </SmallColumn>
              </GroupBody>
              <GroupLabel>形状</GroupLabel>
            </Group>

            <Group $w={104}>
              <GroupBody>
                <BigButton disabled>
                  <span><Weights>{[1, 2, 4, 6, 8, 12].map(h => <Weight key={h} $h={h} />)}</Weights></span>
                  <Line>粗</Line><Line>细<Caret fill="#737373" /></Line>
                </BigButton>
              </GroupBody>
            </Group>

            <Group $w={712}>
              <GroupBody $gap={0}>
                <BigButton $on><span><Swatch $fill="linear-gradient(#000, #000)" $size={64} $pad={3} /></span><Line>颜</Line><Line>色 1</Line></BigButton>
                <BigButton><span><Swatch $fill="linear-gradient(#fff, #fff)" $size={48} $pad={0} /></span><Line>颜</Line><Line>色 2</Line></BigButton>
                <Palette>
                  {Array.from({ length: 30 }, (_, n) => <PaletteCell key={n} $fill={colors[n]} aria-label={colors[n] ?? '自定义颜色'} />)}
                </Palette>
                <BigButton><span><Spectrum /></span><Line>编辑</Line><Line>颜色</Line></BigButton>
              </GroupBody>
              <GroupLabel>颜色</GroupLabel>
            </Group>
          </Ribbon>

          <Workspace>
            <Canvas>
              {steps.map((s, n) => (
                <React.Fragment key={n}>
                  <Note $x={s.i[0]} $y={s.i[1]} $size={55}>i</Note>
                  <Note $x={s.top[0]} $y={s.top[1]} $size={68}>1 1 2 2</Note>
                  <Note $x={s.low[0]} $y={s.low[1]} $size={68}>2 2</Note>
                  <Note $x={s.j[0]} $y={s.j[1]} $size={55}>j</Note>
                </React.Fragment>
              ))}
              <Note $x={212} $y={642} $size={53}><Code>nums1[i] &lt; nums2[j]</Code>{'\n'}因此i向后移动</Note>
              <Note $x={1069} $y={650} $size={53}>此时<Code>nums1[i] = nums2[j]</Code>{'\n'}为交集</Note>
              <Note $x={1940} $y={660} $size={53}>i或j大于数组长，循环{'\n'}结束</Note>
              <Note as="span" $x={67} $y={398} $size={24} aria-hidden><svg width="1" height="18"><path d="M0 0h1v18H0z" fill="#8fe4f5" /></svg></Note>
              <Note as="span" $x={2312} $y={582} $size={24} aria-hidden>
                <svg width="14" height="9" fill="none" stroke="#4d4d4d"><path d="M.5.5h13v8H.5zM5 .5v8M9 .5v8M.5 3h13" /></svg>
              </Note>
            </Canvas>
            <Scroll $vertical>
              <ScrollButton aria-label="向上滚动"><Arrow d="M0 9l6-6 6 6" /></ScrollButton>
              <Thumb $grow={945} />
              <Track $grow={52} />
              <ScrollButton aria-label="向下滚动"><Arrow d="M0 3l6 6 6-6" /></ScrollButton>
            </Scroll>
            <Scroll>
              <SideScrollButton aria-label="向左滚动"><Arrow d="M9 0L3 6l6 6" /></SideScrollButton>
              <TrackGap />
              <Thumb $grow={1} />
              <SideScrollButton aria-label="向右滚动"><Arrow d="M3 0l6 6-6 6" /></SideScrollButton>
            </Scroll>
          </Workspace>

          <Status>
            <Cell $w={333}>
              <svg width="28" height="28" viewBox="0 0 28 28" fill="none" stroke="#22375c" strokeWidth="1.500">
                <path d="M14 1v26M1 14h26M11 4l3-3 3 3M11 24l3 3 3-3M4 11l-3 3 3 3M24 11l3 3-3 3" />
              </svg>
            </Cell>
            <Cell $w={333}><MeasureIcon />9 × 3像素</Cell>
            <Cell $w={333}><MeasureIcon solid />2487 × 1111像素</Cell>
            <Cell $w={333}>
              <svg width="30" height="28" viewBox="-2 0 30 28" fill="#fff" stroke="#22375c" strokeWidth="1.200">
                <path d="M1 3l2-2h24v26H1z" fill="#e9f3f6" /><path d="M5 1h18v12H5zM8 17h12v10H8zM10 19h3v5h-3z" />
              </svg>
            </Cell>
            <Cell />
            <Zoom>
              <ZoomText htmlFor="zoom">100%</ZoomText>
              <button aria-label="缩小"><RoundButton /></button>
              <Slider id="zoom" type="range" min={0} max={100} defaultValue={50} />
              <button aria-label="放大"><RoundButton plus /></button>
            </Zoom>
          </Status>

          <Taskbar>
            <TaskButton $w={96} aria-label="开始"><WinLogo /></TaskButton>
            <Search>
              <svg width="34" height="34" fill="none" stroke="#000" strokeWidth="2"><circle cx="21" cy="12" r="11" /><path d="M13 20L1 33" /></svg>
              <SearchInput type="search" placeholder="在这里输入你要搜索的内容" aria-label="搜索" />
            </Search>
            <TaskButton aria-label="Cortana"><svg width="32" height="32"><circle cx="16" cy="16" r="14" fill="none" stroke="#000" strokeWidth="4" /></svg></TaskButton>
            <TaskButton aria-label="任务视图">
              <svg width="32" height="32" fill="none" stroke="#000" strokeWidth="2"><path d="M1 1v5h20V1M1 10h20v12H1zM1 31v-5h20v5M29 1v5M29 17v14" /><path d="M26 9h6v6h-6z" fill="#000" stroke="none" /></svg>
            </TaskButton>
            <TaskButton aria-label="Microsoft Edge"><EdgeIcon /></TaskButton>
            <TaskButton aria-label="文件资源管理器"><FolderIcon /></TaskButton>
            <TaskButton aria-label="Office"><OfficeIcon /></TaskButton>
            <TaskButton $active aria-label="画图"><PaletteIcon size={48} /></TaskButton>
            <Tray>
              <TaskButton $w={48} aria-label="显示隐藏的图标"><Arrow d="M0 12L6 0l6 12" w={26} h={13} color="#000" weight={2} /></TaskButton>
              <TaskButton $w={48} aria-label="网络连接">
                <svg width="32" height="29" fill="none" stroke="#000" strokeWidth="2"><path d="M9 4h22v18H6M1 1h8v9H1zM5 10v18M3 5h4M17 22v5M10 28h14" /></svg>
              </TaskButton>
              <TaskButton $w={48} aria-label="音量">
                <svg width="34" height="28" fill="none" stroke="#000" strokeWidth="2">
                  <path d="M1 9h5l6-6v22l-6-6H1zM17 10c2 3 2 5 0 8M21 6c4 5 4 11 0 16" /><path d="M26 2c7 7 7 17 0 24" stroke="#82949b" />
                </svg>
              </TaskButton>
              <TaskButton $w={48}><ImeLang>中</ImeLang></TaskButton>
              <TaskButton $w={64}><ImeMode>拼</ImeMode></TaskButton>
              <Clock dateTime="2021-08-01T21:29">21:29<br />2021/8/1</Clock>
              <NoticeButton $w={92} aria-label="通知">
                <svg width="60" height="32" viewBox="0 0 60 32"><path d="M4 0h32v26H4zM12 26h14v6z" /><path d="M9 7h22M9 13h22M9 19h14" stroke="#c1d3da" strokeWidth="2" /></svg>
                <Badge>4</Badge>
              </NoticeButton>
              <ShowDesktop aria-label="显示桌面" />
            </Tray>
          </Taskbar>
        </Window>
      </Stage>
    </>
  );
}
